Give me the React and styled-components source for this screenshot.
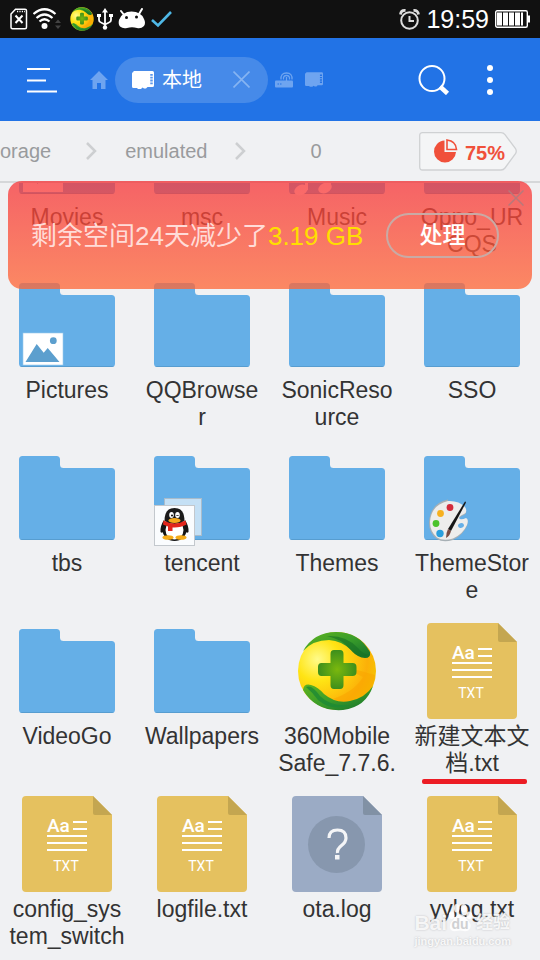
import React from 'react';
import styled, { createGlobalStyle } from 'styled-components';

const GlobalStyle = createGlobalStyle`
  * {
    box-sizing: border-box;
  }
  body {
    margin: 0;
    background: #f0f1f3;
    font-family: 'Liberation Sans', 'Noto Sans CJK SC', sans-serif;
  }
  button {
    padding: 0;
    border: none;
    background: none;
    font-family: inherit;
    color: inherit;
  }
  svg {
    display: block;
    flex: none;
  }
`;

const Screen = styled.div`
  position: relative;
  display: flex;
  flex-direction: column;
  height: 100vh;
  overflow: hidden;
`;

const StatusBar = styled.div`
  display: flex;
  align-items: center;
  flex: none;
  height: 38px;
  padding: 0 10px;
  background: #111;
  color: #fff;
`;

const StatusGroup = styled.div`
  display: flex;
  align-items: center;
  gap: ${(props) => props.$gap}px;
  margin-left: ${(props) => (props.$end ? 'auto' : '0')};
`;

const Clock = styled.span`
  font-size: 25px;
  line-height: 38px;
`;

const Header = styled.header`
  display: flex;
  align-items: center;
  flex: none;
  height: 83px;
  padding: 0 46px 0 27px;
  background: #2273e6;
  color: #fff;
`;

const IconButton = styled.button`
  display: flex;
  align-items: center;
  color: ${(props) => (props.$dim ? '#6ea4f0' : '#fff')};
`;

const HeaderTabs = styled.nav`
  display: flex;
  align-items: center;
  gap: 12px;
  margin-left: 33px;
`;

const HeaderActions = styled.div`
  display: flex;
  align-items: center;
  gap: 36px;
  margin-left: auto;
`;

const ActiveTab = styled.div`
  display: flex;
  align-items: center;
  width: 153px;
  height: 46px;
  margin: 0 -5px;
  padding: 0 18px 0 17px;
  border-radius: 23px;
  background: #468ae9;
`;

const TabName = styled.span`
  margin: 0 auto 0 8px;
  font-size: 20px;
  line-height: 46px;
`;

const PathBar = styled.nav`
  display: flex;
  align-items: center;
  flex: none;
  height: 62px;
  padding-right: 22px;
  border-bottom: 2px solid #d5d7d9;
  color: #999b9d;
`;

const Crumb = styled.a`
  margin: 0 ${(props) => props.$space}px;
  font-size: 20px;
  line-height: 24px;
  color: inherit;
  text-decoration: none;

  &:first-child {
    margin: 0 35px 0 0;
  }
`;

const UsageTag = styled.button`
  display: grid;
  margin-left: auto;
  color: #f0503a;

  > * {
    grid-area: 1 / 1;
  }
`;

const UsageText = styled.span`
  align-self: center;
  padding: 4px 0 0 46px;
  text-align: left;
  font-size: 20px;
  font-weight: bold;
  line-height: 24px;
`;

const FileArea = styled.main`
  position: relative;
  flex: 1;
  min-height: 0;
  overflow: hidden;
`;

const FileGrid = styled.div`
  display: grid;
  grid-template-columns: repeat(4, 1fr);
  grid-auto-rows: 173px;
  margin-top: -79px;
`;

const Tile = styled.button`
  position: relative;
  display: flex;
  flex-direction: column;
  align-items: center;
  padding-right: 1px;
  color: #333;
`;

const TileName = styled.span`
  padding-top: 4px;
  font-size: 23px;
  line-height: 27px;
  white-space: pre;
`;

const Underline = styled.span`
  position: absolute;
  top: 156px;
  left: 17px;
  right: 13px;
  height: 5px;
  border-radius: 2px;
  background: #ec1c24;
`;

const Banner = styled.section`
  position: absolute;
  top: 181px;
  left: 8px;
  right: 8px;
  display: flex;
  align-items: center;
  height: 108px;
  padding: 0 33px 0 23px;
  border-radius: 14px;
  background: linear-gradient(rgba(247, 54, 58, 0.76), rgba(255, 103, 54, 0.76));
`;

const BannerText = styled.p`
  margin: 0;
  padding-top: 2px;
  font-size: 26px;
  line-height: 36px;
  white-space: nowrap;
  color: #ffdcd8;
`;

const Amount = styled.span`
  color: #ffde00;
`;

const CleanButton = styled.button`
  width: 113px;
  height: 45px;
  margin-left: auto;
  border: 2px solid #c9aaa5;
  border-radius: 23px;
  font-size: 23px;
  line-height: 41px;
  font-weight: 500;
  color: #fff;
`;

const CloseButton = styled.button`
  position: absolute;
  top: 9px;
  right: 8px;
`;

const Watermark = styled.div`
  position: absolute;
  right: 29px;
  bottom: 12px;
  color: rgba(255, 255, 255, 0.85);
  font-weight: bold;
  text-shadow: 0 0 2px #b9babd;
  pointer-events: none;
`;

const WatermarkLogo = styled.div`
  display: flex;
  align-items: flex-end;
  font-size: 21px;
  line-height: 22px;
`;

const WatermarkPaw = styled.span`
  display: grid;
  justify-items: center;
  align-items: end;
  color: #cfd0d2;
  font-size: 14px;
  line-height: 20px;
  text-shadow: none;

  > * {
    grid-area: 1 / 1;
  }
`;

const WatermarkCjk = styled.span`
  padding-left: 3px;
  font-size: 17px;
`;

const WatermarkUrl = styled.div`
  font-size: 11px;
  line-height: 14px;
`;

const SafeLogo = ({ size, id }) => (
  <svg width={size} height={size} viewBox={size > 50 ? '0 0 96 96' : '8 8 80 80'}>
    <defs>
      <radialGradient id={`${id}-ball`} cx="0.25" cy="0.35" r="0.8">
        <stop offset="0" stopColor="#fffb8a" />
        <stop offset="0.35" stopColor="#ffe414" />
        <stop offset="0.8" stopColor="#fcb008" />
        <stop offset="1" stopColor="#f5c400" />
      </radialGradient>
      <linearGradient id={`${id}-leaf`} x1="0" y1="0" x2="1" y2="1">
        <stop offset="0" stopColor="#5fb31f" />
        <stop offset="0.5" stopColor="#3a9d2a" />
        <stop offset="1" stopColor="#14702c" />
      </linearGradient>
      <radialGradient id={`${id}-cross`}>
        <stop offset="0" stopColor="#7bb80d" />
        <stop offset="1" stopColor="#3d8f1c" />
      </radialGradient>
    </defs>
    <circle cx="48" cy="48" r="39" fill={`url(#${id}-ball)`} />
    <path d="M50 42 L86 52 Q85 68 74 75 Q58 83 44 76 Q66 68 74 54Z" fill="#f9a400" opacity="0.55" />
    <path d="M14 28 Q25 9 47 9 Q70 9 81 29 Q82 35 76 35 Q69 35 62 27 Q53 18 40 17 Q24 17 14 28Z" fill={`url(#${id}-leaf)`} />
    <path d="M38 13 Q57 12 69 25 Q74 31 80 32 Q69 37 60 25 Q52 16 38 13Z" fill="#176f25" opacity="0.6" />
    <path d="M14 67 Q15 60 22 62 Q29 64 35 71 Q47 81 61 78 Q76 75 84 63 Q77 84 54 87 Q27 89 14 67Z" fill={`url(#${id}-leaf)`} />
    <path d="M17 64 Q23 61 31 73 Q42 84 61 82 Q43 89 29 77 Q23 69 17 64Z" fill="#1d8a35" opacity="0.8" />
    <path d="M45 27h6q3.500 0 3.500 4v9h9q4 0 4 4v5q0 4-4 4h-9v9q0 4-3.500 4h-6q-3.500 0-3.500-4v-9h-9q-3.500 0-3.500-4v-5q0-4 3.500-4h9v-9q0-4 3.500-4z" fill={`url(#${id}-cross)`} />
  </svg>
);

const FolderIcon = ({ children }) => (
  <svg width="96" height="96" viewBox="0 0 96 96">
    <path d="M0 9.500q0-3.500 3.500-3.500h34q3.500 0 3.500 3.500v5q0 3.500 3.500 3.500h48q3.500 0 3.500 3.500v65q0 3.500-3.500 3.500h-89q-3.500 0-3.500-3.500z" fill="#65afe7" />
    <path d="M1 89q1 1 2.500 1h89q1.500 0 2.500-1z" fill="#579dd0" />
    {children}
  </svg>
);

const PictureBadge = () => (
  <g>
    <rect x="4" y="56" width="40" height="32" fill="#fff" stroke="#9cc9ea" strokeWidth="0.6" />
    <path d="M6.500 85 17.700 67l7 8.700 4-4.700L40.500 85z" fill="#5c9fce" />
    <circle cx="34.300" cy="63.700" r="3.400" fill="#5c9fce" />
  </g>
);

const MovieBadge = () => (
  <g>
    <rect x="4" y="56" width="40" height="32" fill="#fff" />
    <path d="M18 62l12 9-12 9z" fill="#65afe7" />
  </g>
);

const MusicBadge = () => (
  <g fill="#fff">
    <ellipse cx="12" cy="86" rx="7" ry="5" transform="rotate(-25 12 86)" />
    <ellipse cx="36" cy="84" rx="7" ry="5" transform="rotate(-25 36 84)" />
    <path d="M16 60l26-5v28h-3V65l-20 4v17h-3z" />
  </g>
);

const PenguinBadge = () => (
  <g>
    <rect x="10.500" y="48.500" width="37" height="37" fill="#c4e0f5" stroke="#a9bccb" />
    <rect x="0.500" y="55.500" width="40" height="40" fill="#fafcfe" stroke="#c3c8cd" />
    <path d="M10 70Q6 76 6.500 82q2 2 4-2zM31 70q4 6 3.500 12-2 2-4-2z" fill="#151515" />
    <ellipse cx="20.500" cy="80" rx="12" ry="11" fill="#151515" />
    <ellipse cx="20.500" cy="80" rx="9" ry="9.500" fill="#fff" />
    <path d="M10.500 71q0-13 10-13t10 13q-10 6-20 0z" fill="#1b1b1b" />
    <ellipse cx="17.500" cy="65" rx="2.300" ry="3" fill="#fff" />
    <ellipse cx="23.500" cy="65" rx="2.300" ry="3" fill="#fff" />
    <circle cx="18" cy="65.500" r="1" />
    <path d="M22.500 66q1-2 2 0" fill="none" stroke="#111" />
    <ellipse cx="20.500" cy="70.500" rx="6" ry="2.500" fill="#f6a91b" />
    <path d="M9.500 70.500q11 6 22 0l1 4q-6 3.500-14 3v3.500h-4.500v-4.500l-5-2z" fill="#e2251b" />
    <ellipse cx="14" cy="87.500" rx="5.500" ry="2.300" fill="#f5ab18" />
    <ellipse cx="27" cy="87.500" rx="5.500" ry="2.300" fill="#f5ab18" />
  </g>
);

const PaletteBadge = () => (
  <g>
    <path d="M24 51.500Q35 51 41 58q3 5-1 7-7 3-4 5 2 1 6-1 3 1 1 7-4 9-14 14-10 3-16-1-8-6-8-16 1-20 19-23.500z" fill="#a7b0b5" />
    <path d="M24 51Q35 50.500 41 57q3 5-1 7-7 3-4 5 2 1 6-1 3 1 1 7-4 9-14 13.500-10 3-16-1-7-6-7-15.500Q7 55 24 51z" fill="#ededec" />
    <ellipse cx="37" cy="75.500" rx="3" ry="2.300" transform="rotate(-15 37 75.500)" fill="#65afe7" />
    <circle cx="26" cy="57.500" r="3.400" fill="#d32b3b" />
    <circle cx="16.500" cy="63.500" r="3.400" fill="#f6b01f" />
    <circle cx="12" cy="73.500" r="3.400" fill="#4ac32c" />
    <circle cx="16" cy="83.500" r="3.700" fill="#2a9fdd" />
    <path d="M41 51.500q1.500 0 .5 2L27 81l-3-2z" fill="#161616" />
    <path d="M24 79l3 2q-1 5-5 7 0-5 2-9z" fill="#7a4d44" />
  </g>
);

const TextFileIcon = () => (
  <svg width="96" height="96" viewBox="0 0 96 96">
    <path d="M6 0h68l19 19v73q0 4-4 4H7q-4 0-4-4V4q0-4 4-4z" fill="#e5c15f" />
    <path d="M74 0l19 19H76q-2 0-2-2z" fill="#c4a650" />
    <path d="M54 26h14M54 33h14M28 40h40M28 47h40M28 54h40" stroke="#fff" strokeWidth="2" />
    <text x="28" y="36" fontFamily="Roboto, sans-serif" fontSize="19" fontWeight="500" fill="#fff">Aa</text>
    <text x="47" y="75" textAnchor="middle" fontFamily="Roboto, sans-serif" fontSize="14" fontWeight="400" fill="#fff">TXT</text>
  </svg>
);

const UnknownFileIcon = () => (
  <svg width="96" height="96" viewBox="0 0 96 96">
    <path d="M6 0h68l19 19v73q0 4-4 4H7q-4 0-4-4V4q0-4 4-4z" fill="#9babc5" />
    <path d="M74 0l19 19H76q-2 0-2-2z" fill="#8191a5" />
    <circle cx="47.500" cy="48.500" r="28.500" fill="#8797ae" />
    <path d="M40 42q0-8 8.500-8t8.500 8q0 4-4.500 7.500T48.500 57" fill="none" stroke="#f4f5f7" strokeWidth="3.200" />
    <rect x="46" y="59" width="4.500" height="4.500" fill="#f4f5f7" />
  </svg>
);

const SdCardShape = ({ width, height, dots }) => (
  <svg width={width} height={height} viewBox="0 0 22 18">
    <path d="M1.500 0h19q1.500 0 1.500 1.500v13q0 1.500-1.500 1.500h-5l-1.500 1.500h-2l-1.500-1-1.500 1.500h-3l-1-1H1.500q-1.500 0-1.500-1.500v-13q0-1.500 1.500-1.500z" fill="currentColor" />
    <path d="M19.500 3v11" stroke={dots} strokeWidth="2.500" strokeDasharray="1.800 1" />
  </svg>
);

const Chevron = () => (
  <svg width="11" height="18" viewBox="0 0 11 18">
    <path d="M1 1l8 8-8 8" fill="none" stroke="#cdcfd1" strokeWidth="2.500" />
  </svg>
);

const CrossIcon = ({ size, color }) => (
  <svg width={size} height={size} viewBox="0 0 16 16">
    <path d="M0.500 0.500l15 15M15.500 0.500l-15 15" stroke={color} strokeWidth="1.500" />
  </svg>
);

const files = [
  { name: 'Movies', icon: <FolderIcon><MovieBadge /></FolderIcon> },
  { name: 'msc', icon: <FolderIcon /> },
  { name: 'Music', icon: <FolderIcon><MusicBadge /></FolderIcon> },
  { name: 'Oppo_UR\nCQS', icon: <FolderIcon /> },
  { name: 'Pictures', icon: <FolderIcon><PictureBadge /></FolderIcon> },
  { name: 'QQBrowse\nr', icon: <FolderIcon /> },
  { name: 'SonicReso\nurce', icon: <FolderIcon /> },
  { name: 'SSO', icon: <FolderIcon /> },
  { name: 'tbs', icon: <FolderIcon /> },
  { name: 'tencent', icon: <FolderIcon><PenguinBadge /></FolderIcon> },
  { name: 'Themes', icon: <FolderIcon /> },
  { name: 'ThemeStor\ne', icon: <FolderIcon><PaletteBadge /></FolderIcon> },
  { name: 'VideoGo', icon: <FolderIcon /> },
  { name: 'Wallpapers', icon: <FolderIcon /> },
  { name: '360Mobile\nSafe_7.7.6.', icon: <SafeLogo size={96} id="app" /> },
  { name: '新建文本文\n档.txt', icon: <TextFileIcon />, marked: true },
  { name: 'config_sys\ntem_switch', icon: <TextFileIcon /> },
  { name: 'logfile.txt', icon: <TextFileIcon /> },
  { name: 'ota.log', icon: <UnknownFileIcon /> },
  { name: 'yylog.txt', icon: <TextFileIcon /> },
];

function PhoneStatus() {
  return (
    <StatusBar>
      <StatusGroup $gap={5}>
        <svg width="18" height="22" viewBox="0 0 18 22" fill="none" stroke="#fff" strokeWidth="1.500">
          <path d="M5.500 1.200H15q1.500 0 1.500 1.500v16.600q0 1.500-1.500 1.500H2.500Q1 20.800 1 19.300V6z" />
          <path d="M7 3.500h8" strokeDasharray="1.200 1.200" />
          <path d="M5.500 7.500l7 7.500M12.500 7.500l-7 7.500" strokeWidth="2" />
        </svg>
        <svg width="28" height="22" viewBox="0 0 28 22" fill="none" stroke="#fff" strokeWidth="2.200">
          <path d="M0.500 6Q11.500-3.500 22.500 6M3.500 10Q11.500 3 19.500 10M6.500 13.500q5-4.500 10 0" />
          <circle cx="11.500" cy="18" r="3" fill="#fff" stroke="none" />
          <path d="M22 15l3-3.500 3 3.500zM22 17.500l3 3.500 3-3.500z" fill="#444" stroke="none" />
        </svg>
        <StatusGroup $gap={3}>
          <svg width="1" height="1" />
          <SafeLogo size={24} id="status" />
          <svg width="16" height="22" viewBox="0 0 16 22" fill="none" stroke="#fff" strokeWidth="1.800">
            <path d="M8 3v16M2 8v4q0 2 2 2.500l4 2M14 8v4q0 2-2 2.500l-4 2" />
            <path d="M8 0l3 4.500H5z" fill="#fff" stroke="none" />
            <circle cx="8" cy="19.500" r="2.200" fill="#fff" stroke="none" />
            <path d="M0 7.500h4M12 7.500h4" strokeWidth="3" />
          </svg>
        </StatusGroup>
        <svg width="28" height="22" viewBox="0 0 28 22">
          <path d="M3 3l3.500 4.500M24 1L21 6" stroke="#fff" strokeWidth="2" strokeLinecap="round" />
          <path d="M1 12Q4 3.500 13.500 3.500T26 11q2 4 0 7-3 3-7 2-5-1.500-10 0-4 1-7-1.500Q0 16 1 12z" fill="#fff" />
          <circle cx="8.500" cy="9.500" r="1.500" fill="#111" />
          <circle cx="18.500" cy="9" r="1.500" fill="#111" />
        </svg>
        <svg width="21" height="17" viewBox="0 0 21 17">
          <path d="M1 9l6 5.500L20 1" fill="none" stroke="#4fb8e6" strokeWidth="2.600" />
        </svg>
      </StatusGroup>
      <StatusGroup $gap={6} $end>
        <svg width="21" height="21" viewBox="0 0 21 21" fill="none" stroke="#ddd" strokeWidth="2">
          <circle cx="10.500" cy="11.500" r="8.300" />
          <path d="M1.500 5.500Q2 1 6.500 1.500M14.500 1.500Q19 1 19.500 5.500" strokeWidth="2.800" />
          <path d="M10.500 7v5H15" />
        </svg>
        <Clock>19:59</Clock>
        <svg width="35" height="18" viewBox="0 0 35 18">
          <rect x="0.700" y="0.700" width="31.600" height="16.600" rx="1.500" fill="none" stroke="#fff" strokeWidth="1.400" />
          <path d="M33 5.500h2v7h-2z" fill="#fff" />
          <path d="M2 2.500h5v13H2zM8 2.500h5v13H8zM14 2.500h5v13h-5zM20 2.500h5v13h-5zM26 2.500h2v13h-2z" fill="#fff" />
        </svg>
      </StatusGroup>
    </StatusBar>
  );
}

function TopBar() {
  return (
    <Header>
      <IconButton aria-label="Menu">
        <svg width="30" height="26" viewBox="0 0 30 26" stroke="#fff" strokeWidth="2">
          <path d="M0 2h23M0 13.500h19M0 24.500h30" />
        </svg>
      </IconButton>
      <HeaderTabs>
        <IconButton $dim aria-label="Home">
          <svg width="18" height="18" viewBox="0 0 18 18">
            <path d="M9 0l9 9h-2.500v9H11v-6H7v6H2.500V9H0z" fill="currentColor" />
          </svg>
        </IconButton>
        <ActiveTab>
          <SdCardShape width="22" height="18" dots="#5b97ec" />
          <TabName>本地</TabName>
          <IconButton aria-label="Close tab">
            <CrossIcon size={17} color="#86b4f2" />
          </IconButton>
        </ActiveTab>
        <IconButton $dim aria-label="Network">
          <svg width="18" height="16" viewBox="0 0 18 16" fill="none" stroke="currentColor">
            <path d="M1 8.500h16q1 0 1 1v5q0 1-1 1H1q-1 0-1-1v-5q0-1 1-1z" fill="currentColor" stroke="none" />
            <path d="M6 7.500Q5.500 1 11.500 1T17 7.500M8.500 7.500Q8 3.500 11.500 3.500T14.500 7.500M11.500 5v4" strokeWidth="1.300" />
            <path d="M2.500 12h1.500M5 12h1.500" stroke="#2273e6" />
          </svg>
        </IconButton>
        <IconButton $dim aria-label="SD card">
          <SdCardShape width="18" height="15" dots="#2273e6" />
        </IconButton>
      </HeaderTabs>
      <HeaderActions>
        <IconButton aria-label="Search">
          <svg width="32" height="30" viewBox="0 0 32 30" fill="none" stroke="#fff">
            <circle cx="14" cy="13.500" r="12.500" strokeWidth="2" />
            <path d="M22 21.500l7.500 7" strokeWidth="4.500" />
          </svg>
        </IconButton>
        <IconButton aria-label="More">
          <svg width="8" height="30" viewBox="0 0 8 30" fill="#fff">
            <circle cx="4" cy="3" r="3" />
            <circle cx="4" cy="15" r="3" />
            <circle cx="4" cy="27" r="3" />
          </svg>
        </IconButton>
      </HeaderActions>
    </Header>
  );
}

function Breadcrumbs() {
  return (
    <PathBar>
      <Crumb href="#storage">orage</Crumb>
      <Chevron />
      <Crumb href="#emulated" $space={28}>emulated</Crumb>
      <Chevron />
      <Crumb href="#0" $space={64}>0</Crumb>
      <UsageTag>
        <svg width="99" height="39" viewBox="0 0 99 39">
          <path d="M3.500 0.700H82q2.500 0 4 2l10.500 14q1.500 2.500 0 5L86 36q-1.500 2-4 2H3.500Q0.700 38 0.700 35V3.500Q0.700 0.700 3.500 0.700z" fill="#f4f5f6" stroke="#cfd1d3" strokeWidth="1.300" />
          <path d="M25.500 8.500A11 11 0 1 0 37 20H25.500z" fill="#f0503a" />
          <path d="M28 8v9.500h9.500Q37 9 28 8z" fill="none" stroke="#f0503a" strokeWidth="1.600" />
        </svg>
        <UsageText>75%</UsageText>
      </UsageTag>
    </PathBar>
  );
}

function SpaceBanner() {
  return (
    <Banner>
      <BannerText>
        剩余空间24天减少了<Amount>3.19 GB</Amount>
      </BannerText>
      <CleanButton>处理</CleanButton>
      <CloseButton aria-label="Close">
        <CrossIcon size={16} color="#b8787a" />
      </CloseButton>
    </Banner>
  );
}

function App() {
  return (
    <>
      <GlobalStyle />
      <Screen>
        <PhoneStatus />
        <TopBar />
        <Breadcrumbs />
        <FileArea>
          <FileGrid>
            {files.map((file) => (
              <Tile key={file.name}>
                {file.icon}
                <TileName>{file.name}</TileName>
                {file.marked && <Underline />}
              </Tile>
            ))}
          </FileGrid>
        </FileArea>
        <SpaceBanner />
        <Watermark>
          <WatermarkLogo>
            Bai
            <WatermarkPaw>
              <svg width="26" height="32" viewBox="0 0 28 32" fill="rgba(255,255,255,0.85)">
                <ellipse cx="5" cy="13" rx="3" ry="4" />
                <ellipse cx="10.500" cy="5.500" rx="3" ry="4.500" />
                <ellipse cx="18" cy="5.500" rx="3" ry="4.500" />
                <ellipse cx="24" cy="13" rx="3" ry="4" />
                <path d="M14 12q4 0 7 5 6 5 4 10-2 4-7 3-4-1-8 0-6 1-7-4 0-5 4-8 3-6 7-6z" />
              </svg>
              <span>du</span>
            </WatermarkPaw>
            <WatermarkCjk>经验</WatermarkCjk>
          </WatermarkLogo>
          <WatermarkUrl>jingyan.baidu.com</WatermarkUrl>
        </Watermark>
      </Screen>
    </>
  );
}

export default App;
